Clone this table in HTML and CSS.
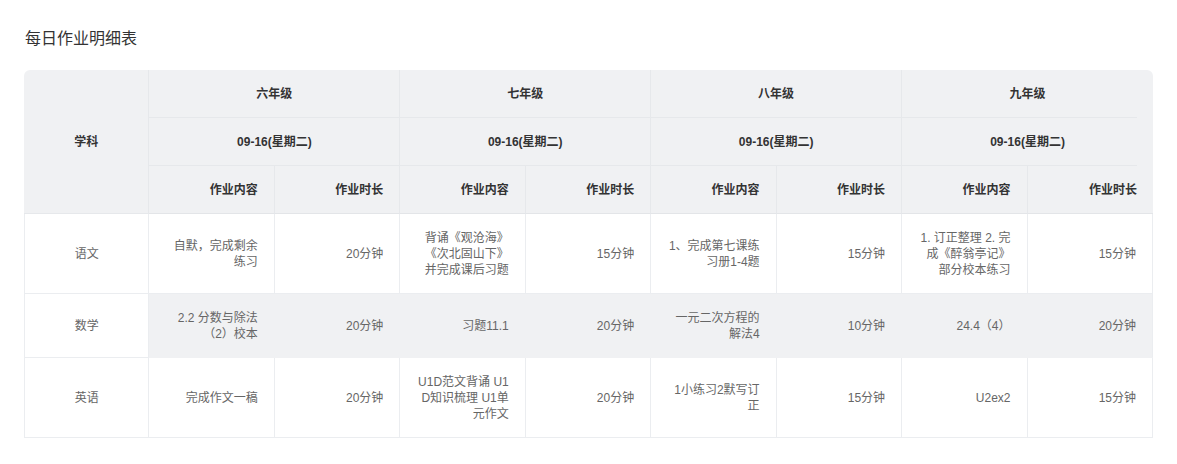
FILE: index.html
```html
<!DOCTYPE html>
<html lang="zh-CN">
<head>
<meta charset="utf-8">
<title>每日作业明细表</title>
<link rel="stylesheet" href="styles.css">
</head>
<body>
<div class="page">
  <h1 class="title">每日作业明细表</h1>
  <div class="table-wrap">
    <table class="grid">
      <thead>
        <tr>
          <th rowspan="3" class="c-center">学科</th>
          <th colspan="2" class="c-center">六年级</th>
          <th colspan="2" class="c-center">七年级</th>
          <th colspan="2" class="c-center">八年级</th>
          <th colspan="2" class="c-center edge">九年级</th>
        </tr>
        <tr>
          <th colspan="2" class="c-center">09-16(星期二)</th>
          <th colspan="2" class="c-center">09-16(星期二)</th>
          <th colspan="2" class="c-center">09-16(星期二)</th>
          <th colspan="2" class="c-center edge">09-16(星期二)</th>
        </tr>
        <tr>
          <th>作业内容</th><th>作业时长</th>
          <th>作业内容</th><th>作业时长</th>
          <th>作业内容</th><th>作业时长</th>
          <th>作业内容</th><th class="edge">作业时长</th>
        </tr>
      </thead>
      <tbody>
        <tr>
          <td class="c-center subj">语文</td>
          <td>自默，完成剩余练习</td><td>20分钟</td>
          <td>背诵《观沧海》《次北固山下》并完成课后习题</td><td>15分钟</td>
          <td>1、完成第七课练习册1-4题</td><td>15分钟</td>
          <td>1. 订正整理 2. 完成《醉翁亭记》部分校本练习</td><td class="last">15分钟</td>
        </tr>
        <tr class="stripe">
          <td class="c-center subj">数学</td>
          <td>2.2 分数与除法（2）校本</td><td>20分钟</td>
          <td>习题11.1</td><td>20分钟</td>
          <td>一元二次方程的解法4</td><td>10分钟</td>
          <td>24.4（4）</td><td class="last">20分钟</td>
        </tr>
        <tr>
          <td class="c-center subj">英语</td>
          <td>完成作文一稿</td><td>20分钟</td>
          <td>U1D范文背诵 U1D知识梳理 U1单元作文</td><td>20分钟</td>
          <td>1小练习2默写订正</td><td>15分钟</td>
          <td>U2ex2</td><td class="last">15分钟</td>
        </tr>
      </tbody>
    </table>
  </div>
</div>
</body>
</html>
```
FILE: styles.css
```css
* { box-sizing: border-box; }
html, body {
  margin: 0;
  padding: 0;
  background: #ffffff;
}
body {
  font-family: "Liberation Sans", "Noto Sans CJK SC", sans-serif;
  color: #333333;
}
.page {
  padding: 27px 25px 0 24px;
}
.title {
  margin: 0 0 19px 1px;
  font-size: 16px;
  line-height: 24px;
  font-weight: normal;
  color: #333333;
}
.table-wrap {
  width: 1129px;
  border-radius: 6px 6px 0 0;
  overflow: hidden;
}
.grid {
  width: 100%;
  table-layout: fixed;
  border-collapse: separate;
  border-spacing: 0;
  font-size: 12px;
  line-height: 16px;
}
.grid th,
.grid td {
  padding: 16px 16px 15px 16px;
  text-align: right;
  vertical-align: middle;
  word-break: break-all;
}
.grid th {
  background: #f0f1f3;
  color: #333333;
  font-weight: bold;
  border-right: 1px solid #e6e8eb;
  border-bottom: 1px solid #e6e8eb;
}
.grid th.edge {
  border-right: none;
  border-bottom-color: transparent;
  background: linear-gradient(#e6e8eb, #e6e8eb) left bottom / calc(100% - 16px) 1px no-repeat border-box, #f0f1f3;
}
.grid thead tr:last-child th {
  border-bottom-color: #e3e5e8;
}
.grid td {
  color: #666666;
  background: #ffffff;
  border-right: 1px solid #ebedf0;
  border-bottom: 1px solid #ebedf0;
}
.grid td.subj {
  border-left: 1px solid #ebedf0;
}
.grid .c-center {
  text-align: center;
}
.grid tr.stripe td {
  background: #f0f1f3;
  border-right-color: #f0f1f3;
  border-bottom-color: #f0f1f3;
}
.grid tr.stripe td.subj {
  background: #ffffff;
  border-right-color: #ebedf0;
  border-bottom-color: #ebedf0;
}
.grid tr.stripe td.last {
  border-right-color: #ebedf0;
}
```
